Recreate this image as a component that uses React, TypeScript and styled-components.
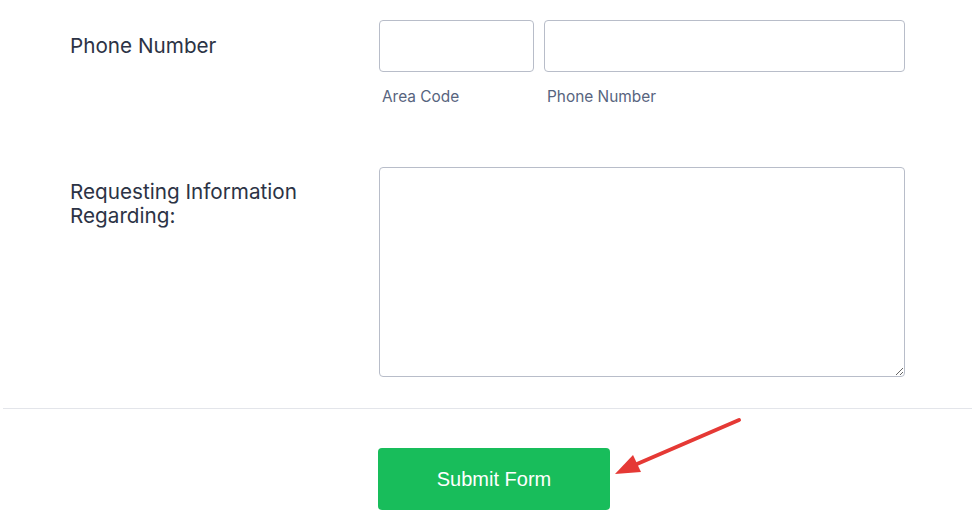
import React from "react";
import styled, { createGlobalStyle } from "styled-components";

const Global = createGlobalStyle`
  html, body { margin: 0; padding: 0; background: #fff; }
  body { font-family: Inter, "Noto Sans", sans-serif; color: #2c3345; }
  * { box-sizing: border-box; }
`;

const Page = styled.div`
  position: relative;
  width: 977px;
  height: 531px;
  overflow: hidden;
  background: #fff;
`;

const Form = styled.div`
  padding: 20px 0 0 3px;
  width: 972px;
`;

const Row = styled.div<{ $mb: number }>`
  display: grid;
  grid-template-columns: 309px 526px;
  padding-left: 67px;
  margin-bottom: ${(p) => p.$mb}px;
`;

const Label = styled.div<{ $pt: number }>`
  font-size: 20.7px;
  line-height: 24px;
  font-weight: 400;
  color: #2c3345;
  padding-top: ${(p) => p.$pt}px;
  padding-right: 8px;
`;

const Fields = styled.div`
  display: flex;
  gap: 10px;
`;

const FieldCol = styled.div<{ $w: number }>`
  display: flex;
  flex-direction: column;
  width: ${(p) => p.$w}px;
`;

const Input = styled.input`
  height: 52px;
  width: 100%;
  border: 1px solid #b8bdc9;
  border-radius: 4px;
  background: #fff;
  outline: none;
  margin: 0;
`;

const SubLabel = styled.label`
  font-size: 15.4px;
  line-height: 18px;
  color: #57647e;
  margin-top: 16px;
  padding-left: 3px;
`;

const TextArea = styled.textarea`
  width: 526px;
  height: 210px;
  border: 1px solid #b8bdc9;
  border-radius: 4px;
  outline: none;
  resize: vertical;
  margin: 0;
  display: block;
`;

const Divider = styled.hr`
  border: none;
  border-top: 1px solid #e3e5ea;
  margin: 0;
  width: 969px;
`;

const ButtonBar = styled.div`
  display: flex;
  padding: 39px 0 0 375px;
`;

const SubmitButton = styled.button`
  width: 232px;
  height: 62px;
  background: #18bd5b;
  border: none;
  border-radius: 4px;
  color: #fff;
  font-family: "Liberation Sans", Arial, sans-serif;
  font-size: 20px;
  cursor: pointer;
`;

const Arrow = styled.svg`
  position: absolute;
  left: 600px;
  top: 410px;
`;

export default function App() {
  return (
    <Page>
      <Global />
      <Form>
        <Row $mb={61}>
          <Label $pt={14}>Phone Number</Label>
          <Fields>
            <FieldCol $w={155}>
              <Input />
              <SubLabel>Area Code</SubLabel>
            </FieldCol>
            <FieldCol $w={361}>
              <Input />
              <SubLabel>Phone Number</SubLabel>
            </FieldCol>
          </Fields>
        </Row>
        <Row $mb={31}>
          <Label $pt={13}>Requesting Information Regarding:</Label>
          <TextArea />
        </Row>
        <Divider />
        <ButtonBar>
          <SubmitButton>Submit Form</SubmitButton>
        </ButtonBar>
      </Form>
      <Arrow width="160" height="80" viewBox="0 0 160 80">
        <line x1="139" y1="10" x2="30" y2="57" stroke="#e53935" strokeWidth="4" strokeLinecap="round" />
        <polygon points="15,64 33,45 41,62" fill="#e53935" />
      </Arrow>
    </Page>
  );
}
